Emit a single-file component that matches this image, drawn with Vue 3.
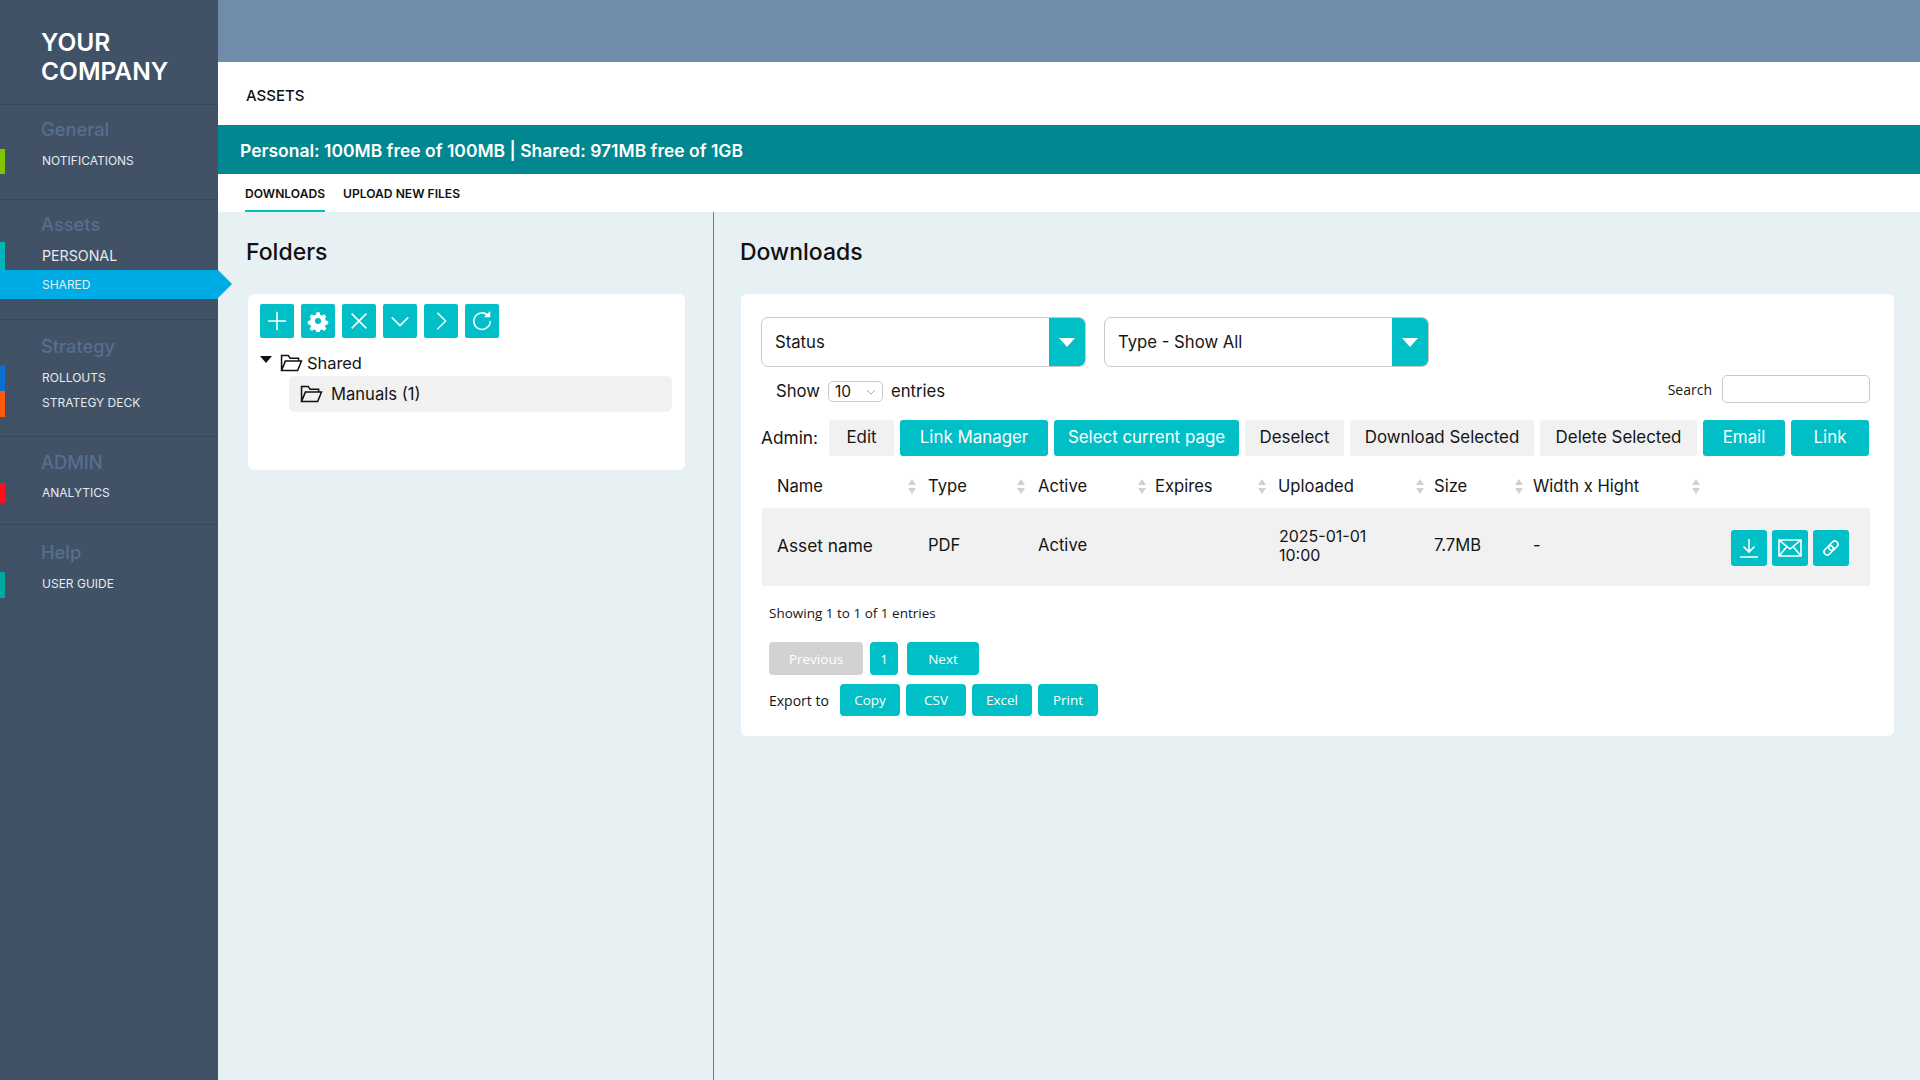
<template>
  <div class="page">
    <aside class="sidebar">
      <div class="logo">YOUR<br />COMPANY</div>
      <section v-for="group in navGroups" :key="group.title" class="nav-group" :class="group.cls">
        <h4>{{ group.title }}</h4>
        <a v-for="item in group.items" :key="item.label" class="nav-item" :class="item.cls">{{ item.label }}</a>
      </section>
    </aside>

    <main class="main">
      <div class="topbar"></div>
      <div class="title-row">ASSETS</div>
      <div class="banner">Personal: 100MB free of 100MB | Shared: 971MB free of 1GB</div>
      <nav class="tabs">
        <a class="tab active">DOWNLOADS</a>
        <a class="tab">UPLOAD NEW FILES</a>
      </nav>

      <div class="content">
        <div class="col-folders">
          <h2>Folders</h2>
          <div class="card folder-card">
            <div class="tools">
              <button class="tool">
                <svg viewBox="0 0 24 24"><path d="M12 2v20M2 12h20" /></svg>
              </button>
              <button class="tool">
                <svg viewBox="0 0 24 24">
                  <path class="solid" fill-rule="evenodd" d="M10 1.5h4l.6 3 2.2.9 2.6-1.7 2.8 2.8-1.7 2.6.9 2.2 3 .6v4l-3 .6-.9 2.2 1.7 2.6-2.8 2.8-2.6-1.7-2.2.9-.6 3h-4l-.6-3-2.2-.9-2.6 1.7-2.8-2.8 1.7-2.6-.9-2.2-3-.6v-4l3-.6.9-2.2-1.7-2.6 2.8-2.8 2.6 1.7 2.2-.9zM12 8.3a3.7 3.7 0 1 0 0 7.4 3.7 3.7 0 0 0 0-7.4z" transform="translate(1.2 1.2) scale(.9)" />
                </svg>
              </button>
              <button class="tool">
                <svg viewBox="0 0 24 24"><path d="M4 4l16 16M20 4L4 20" /></svg>
              </button>
              <button class="tool">
                <svg viewBox="0 0 24 24"><path d="M3 8l9 9 9-9" /></svg>
              </button>
              <button class="tool">
                <svg viewBox="0 0 24 24"><path d="M8 3l9 9-9 9" /></svg>
              </button>
              <button class="tool">
                <svg viewBox="0 0 24 24">
                  <path d="M19 6.5A9 9 0 1 0 21 12" />
                  <path class="solid" d="M14 8h7V1z" />
                </svg>
              </button>
            </div>
            <div class="tree-root">
              <span class="caret"></span>
              <svg class="folder" viewBox="0 0 24 19"><path d="M1.5 17.5V1.5h7l2 3h9v3M1.5 17.5h17l4-10h-17z" /></svg>
              <span>Shared</span>
            </div>
            <div class="tree-child">
              <svg class="folder" viewBox="0 0 24 19"><path d="M1.5 17.5V1.5h7l2 3h9v3M1.5 17.5h17l4-10h-17z" /></svg>
              <span>Manuals (1)</span>
            </div>
          </div>
        </div>

        <div class="col-downloads">
          <h2>Downloads</h2>
          <div class="card downloads-card">
            <div class="filters">
              <div v-for="f in filters" :key="f" class="filter">
                <span class="filter-label">{{ f }}</span>
                <span class="filter-arrow"></span>
              </div>
            </div>

            <div class="entries-row">
              <div class="entries">
                Show
                <span class="mini-select">10
                  <svg viewBox="0 0 10 6"><path d="M1 1l4 4 4-4" /></svg>
                </span>
                entries
              </div>
              <label class="search">Search <input type="text" /></label>
            </div>

            <div class="admin-row">
              <span class="admin-label">Admin:</span>
              <button v-for="b in adminButtons" :key="b.label" class="btn" :class="{ grey: b.grey }">{{ b.label }}</button>
            </div>

            <div class="grid-row head">
              <div v-for="col in columns" :key="col" class="cell">
                <span>{{ col }}</span>
                <span class="sort"></span>
              </div>
            </div>
            <div class="grid-row body">
              <div class="cell name">Asset name</div>
              <div class="cell">PDF</div>
              <div class="cell">Active</div>
              <div class="cell"></div>
              <div class="cell date">2025-01-01<br />10:00</div>
              <div class="cell">7.7MB</div>
              <div class="cell">-</div>
              <div class="row-actions">
                <button class="act">
                  <svg viewBox="0 0 24 24"><path d="M12 3v13M6.5 10.5l5.5 5.5 5.5-5.5M3 21h18" /></svg>
                </button>
                <button class="act">
                  <svg viewBox="0 0 24 24"><path d="M1 4h22v16H1zM1 4l11 9 11-9M1 20l8-9.5M23 20l-8-9.5" /></svg>
                </button>
                <button class="act">
                  <svg viewBox="0 0 24 24">
                    <g transform="rotate(-45 12 12)">
                      <rect x="3.5" y="8.8" width="10.5" height="6.4" rx="3.2" />
                      <rect x="10" y="8.8" width="10.5" height="6.4" rx="3.2" />
                    </g>
                  </svg>
                </button>
              </div>
            </div>

            <p class="showing">Showing 1 to 1 of 1 entries</p>

            <div class="pager">
              <button class="small prev">Previous</button>
              <button class="small one">1</button>
              <button class="small next">Next</button>
            </div>
            <div class="export">
              <span class="export-label">Export to</span>
              <button v-for="e in exports" :key="e" class="small exp">{{ e }}</button>
            </div>
          </div>
        </div>
      </div>
    </main>
  </div>
</template>

<script setup>
const navGroups = [
  { title: 'General', cls: 'g-general', items: [{ label: 'NOTIFICATIONS', cls: 'm-green' }] },
  {
    title: 'Assets',
    cls: 'g-assets',
    items: [
      { label: 'PERSONAL', cls: 'm-teal big' },
      { label: 'SHARED', cls: 'selected' },
    ],
  },
  {
    title: 'Strategy',
    cls: 'g-strategy',
    items: [
      { label: 'ROLLOUTS', cls: 'm-blue' },
      { label: 'STRATEGY DECK', cls: 'm-orange' },
    ],
  },
  { title: 'ADMIN', cls: 'g-admin', items: [{ label: 'ANALYTICS', cls: 'm-red' }] },
  { title: 'Help', cls: 'g-help', items: [{ label: 'USER GUIDE', cls: 'm-sea' }] },
]

const filters = ['Status', 'Type - Show All']

const adminButtons = [
  { label: 'Edit', grey: true },
  { label: 'Link Manager' },
  { label: 'Select current page' },
  { label: 'Deselect', grey: true },
  { label: 'Download Selected', grey: true },
  { label: 'Delete Selected', grey: true },
  { label: 'Email' },
  { label: 'Link' },
]

const columns = ['Name', 'Type', 'Active', 'Expires', 'Uploaded', 'Size', 'Width x Hight']
const exports = ['Copy', 'CSV', 'Excel', 'Print']
</script>

<style>
html,
body {
  margin: 0;
  background: #e7f0f3;
}
</style>

<style scoped>
.page {
  display: flex;
  height: 1080px;
  overflow: hidden;
  font-family: Inter, "Noto Sans", sans-serif;
  color: #151515;
}

/* sidebar */
.sidebar {
  width: 218px;
  flex: none;
  background: #415166;
  color: #fff;
}
.logo {
  height: 105px;
  box-sizing: border-box;
  padding: 28px 0 0 41px;
  border-bottom: 1px solid #3a485d;
  font-size: 24.5px;
  line-height: 29px;
  font-weight: 600;
}
.nav-group {
  box-sizing: border-box;
  border-bottom: 1px solid #3a485d;
}
.nav-group h4 {
  margin: 0 0 8px 41px;
  font-size: 18.3px;
  line-height: 24px;
  font-weight: 500;
  color: #566f8d;
}
.g-general { height: 95px; padding-top: 12px; }
.g-assets { height: 120px; padding-top: 12px; }
.g-strategy { height: 117px; padding-top: 14px; }
.g-admin { height: 88px; padding-top: 13px; }
.g-help { border-bottom: 0; padding-top: 15px; }
.g-assets h4 { margin-bottom: 6px; }
.g-strategy h4 { margin-bottom: 7px; }
.g-admin h4 { margin-bottom: 9px; }

.nav-item {
  display: flex;
  align-items: center;
  position: relative;
  height: 26px;
  box-sizing: content-box;
  padding-left: 37px;
  border-left: 5px solid transparent;
  font-size: 12px;
  line-height: 24px;
  color: #e6ebf0;
}
.nav-item.big {
  height: 28px;
  font-size: 14.2px;
}
.m-green { height: 25px; border-left-color: #7ec400; }
.m-teal { border-left-color: #00b5b8; }
.m-blue { border-left-color: #0a6fd0; }
.m-orange { border-left-color: #ff5a0a; }
.m-red { height: 20px; border-left-color: #ff0f1a; }
.m-sea { border-left-color: #00a99d; }
.m-green,
.m-orange,
.m-sea { padding-bottom: 0; align-items: flex-start; }
.nav-item.selected {
  height: 29px;
  background: #00ace6;
  border-left-color: #00ace6;
}
.nav-item.selected::after {
  content: "";
  position: absolute;
  left: 213px;
  top: 0;
  border-style: solid;
  border-width: 14.5px 0 14.5px 14px;
  border-color: transparent transparent transparent #00ace6;
}

/* main column */
.main {
  flex: 1;
  min-width: 0;
  display: flex;
  flex-direction: column;
}
.topbar {
  height: 62px;
  background: #718cab;
}
.title-row {
  height: 63px;
  box-sizing: border-box;
  padding: 24px 0 0 28px;
  background: #fff;
  font-size: 15px;
  line-height: 20px;
  font-weight: 500;
  color: #111;
}
.banner {
  height: 49px;
  box-sizing: border-box;
  padding: 2px 0 0 22px;
  display: flex;
  align-items: center;
  background: #00878f;
  color: #fff;
  font-size: 17.5px;
  font-weight: 600;
}
.tabs {
  height: 38px;
  display: flex;
  gap: 18px;
  padding-left: 27px;
  background: #fff;
}
.tab {
  height: 38px;
  box-sizing: border-box;
  line-height: 40px;
  font-size: 12.1px;
  font-weight: 600;
  color: #111;
}
.tab.active {
  border-bottom: 2px solid #00bfc6;
}

.content {
  flex: 1;
  display: flex;
  background: #e7f0f3;
}
.col-folders {
  width: 497px;
  box-sizing: border-box;
  padding: 25px 28px 0 28px;
  border-right: 1px solid #777;
}
.col-downloads {
  flex: 1;
  padding: 25px 26px 0 26px;
}
h2 {
  margin: 0 0 27px;
  font-size: 23px;
  line-height: 30px;
  font-weight: 500;
  color: #111;
}
.card {
  background: #fff;
  border-radius: 6px;
}

/* folders */
.folder-card {
  margin-left: 2px;
  height: 176px;
  box-sizing: border-box;
  padding: 10px 13px 0 12px;
}
.tools {
  display: flex;
  gap: 7px;
}
.tool {
  width: 34px;
  height: 34px;
  padding: 0;
  border: 0;
  border-radius: 2px;
  background: #00bfc6;
  display: flex;
  align-items: center;
  justify-content: center;
}
.tool svg {
  width: 22px;
  height: 22px;
  fill: none;
  stroke: #fff;
  stroke-width: 1.7;
}
.tool svg .solid {
  fill: #fff;
  stroke: none;
}
.tree-root {
  display: flex;
  align-items: center;
  height: 38px;
  box-sizing: border-box;
  padding-top: 11px;
  font-size: 16.4px;
}
.caret {
  width: 0;
  height: 0;
  margin: 0 8px 6px 0;
  border-style: solid;
  border-width: 7px 6px 0;
  border-color: #111 transparent transparent;
}
.folder {
  width: 23px;
  height: 18px;
  margin-right: 4px;
  fill: none;
  stroke: #111;
  stroke-width: 1.6;
}
.tree-child {
  margin-left: 29px;
  height: 36px;
  border-radius: 6px;
  background: #f1f1f1;
  display: flex;
  align-items: center;
  padding-left: 11px;
  font-size: 16.6px;
}
.tree-child .folder {
  margin-right: 8px;
}

/* downloads */
.downloads-card {
  margin-left: 1px;
  height: 442px;
  box-sizing: border-box;
  padding: 23px 24px 0 20px;
}
.filters {
  display: flex;
  gap: 18px;
}
.filter {
  width: 325px;
  height: 50px;
  box-sizing: border-box;
  border: 1px solid #c8c8c8;
  border-radius: 7px;
  display: flex;
  align-items: center;
  justify-content: space-between;
  overflow: hidden;
}
.filter-label {
  padding-left: 13px;
  font-size: 16.7px;
}
.filter-arrow {
  position: relative;
  align-self: stretch;
  width: 37px;
  margin: -1px;
  background: #00bfc6;
}
.filter-arrow::after {
  content: "";
  position: absolute;
  left: 10px;
  top: 21px;
  border-style: solid;
  border-width: 9px 8.5px 0;
  border-color: #fff transparent transparent;
}
.entries-row {
  height: 28px;
  margin-top: 9px;
  display: flex;
  align-items: center;
  justify-content: space-between;
}
.entries {
  display: flex;
  align-items: center;
  gap: 8px;
  padding: 2px 0 0 15px;
  font-size: 16.7px;
}
.mini-select {
  position: relative;
  width: 55px;
  height: 21px;
  box-sizing: border-box;
  border: 1px solid #c8c8c8;
  border-radius: 5px;
  padding-left: 6px;
  font-size: 15.5px;
  line-height: 20px;
}
.mini-select svg {
  position: absolute;
  right: 6px;
  top: 7px;
  width: 10px;
  height: 6px;
  fill: none;
  stroke: #aaa;
}
.search {
  display: flex;
  align-items: center;
  gap: 10px;
  padding-bottom: 2px;
  font-family: "Open Sans", sans-serif;
  font-size: 14px;
}
.search input {
  width: 148px;
  height: 28px;
  box-sizing: border-box;
  border: 1px solid #c8c8c8;
  border-radius: 5px;
  background: #fff;
}
.admin-row {
  height: 36px;
  margin-top: 16px;
  display: flex;
  align-items: center;
  gap: 6px;
}
.admin-label {
  width: 62px;
  flex: none;
  font-size: 17.3px;
  padding-bottom: 2px;
}
.btn {
  height: 36px;
  padding: 0 0 2px;
  border: 0;
  border-radius: 3px;
  background: #00bfc6;
  color: #fff;
  font-family: inherit;
  font-size: 16.9px;
}
.btn.grey {
  background: #f1f1f1;
  color: #151515;
}
.btn:nth-of-type(1) { width: 65px; }
.btn:nth-of-type(2) { width: 148px; }
.btn:nth-of-type(3) { width: 185px; }
.btn:nth-of-type(4) { width: 99px; }
.btn:nth-of-type(5) { width: 184px; }
.btn:nth-of-type(6) { width: 157px; }
.btn:nth-of-type(7) { width: 82px; }
.btn:nth-of-type(8) { width: 78px; }

.grid-row {
  display: grid;
  grid-template-columns: 154px 109px 121px 120px 158px 99px 177px 1fr;
  width: 1108px;
  box-sizing: border-box;
  margin-left: 1px;
}
.grid-row.head {
  height: 52px;
  padding-top: 8px;
  font-size: 16.6px;
}
.head .cell {
  display: flex;
  align-items: center;
  justify-content: space-between;
}
.cell:nth-child(1) { padding-left: 15px; }
.cell:nth-child(2) { padding-left: 12px; }
.cell:nth-child(3) { padding-left: 13px; }
.cell:nth-child(4) { padding-left: 9px; }
.cell:nth-child(5) { padding-left: 12px; }
.cell:nth-child(6) { padding-left: 10px; }
.cell:nth-child(7) { padding-left: 10px; }
.sort {
  position: relative;
  width: 8px;
  height: 15px;
  flex: none;
}
.sort::before,
.sort::after {
  content: "";
  position: absolute;
  left: 0;
  border-style: solid;
  border-color: #d0d0d0 transparent;
}
.sort::before {
  top: 0;
  border-width: 0 4px 6.5px;
}
.sort::after {
  bottom: 0;
  border-width: 6.5px 4px 0;
}
.grid-row.body {
  height: 78px;
  align-items: center;
  background: #f1f1f1;
  font-size: 16.6px;
}
.body .cell {
  margin-bottom: 4px;
}
.body .name {
  font-size: 17.3px;
}
.body .date {
  font-size: 16px;
  line-height: 19.5px;
  margin: 0 0 2px 1px;
}
.row-actions {
  display: flex;
  gap: 5.5px;
  padding: 1px 0 0 31px;
}
.act {
  width: 35.5px;
  height: 36px;
  padding: 0;
  border: 0;
  border-radius: 3px;
  background: #00bfc6;
  display: flex;
  align-items: center;
  justify-content: center;
}
.act svg {
  width: 24px;
  height: 24px;
  fill: none;
  stroke: #fff;
  stroke-width: 1.6;
}
.showing {
  margin: 17px 0 0 8px;
  height: 20px;
  line-height: 20px;
  font-family: "Open Sans", sans-serif;
  font-size: 13.5px;
}
.pager,
.export {
  display: flex;
  align-items: center;
  margin-left: 8px;
}
.pager {
  margin-top: 19px;
  height: 33px;
}
.export {
  margin-top: 9px;
  height: 32px;
  gap: 6px;
}
.export-label {
  width: 65px;
  font-family: "Open Sans", sans-serif;
  font-size: 14px;
}
.small {
  height: 100%;
  padding: 0;
  border: 0;
  border-radius: 4px;
  background: #00bfc6;
  color: #fff;
  font-family: "Open Sans", sans-serif;
  font-size: 13.5px;
}
.prev { width: 94px; background: #d2d2d2; }
.one { width: 28px; margin: 0 9px 0 7px; }
.next { width: 72px; }
.exp { width: 60px; }
</style>
